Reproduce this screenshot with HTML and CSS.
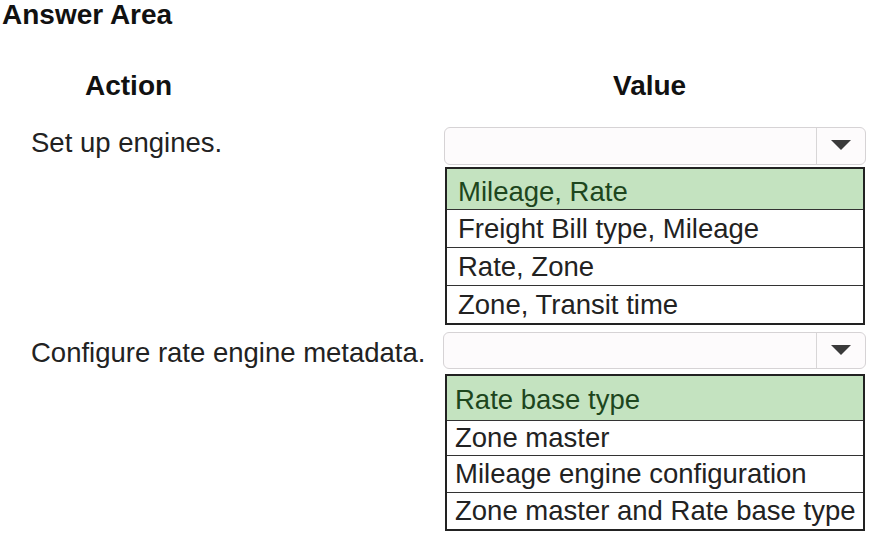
FILE: index.html
```html
<!DOCTYPE html>
<html lang="en">
<head>
  <meta charset="UTF-8">
  <meta name="viewport" content="width=device-width, initial-scale=1.0">
  <title>Answer Area</title>
  <link rel="stylesheet" href="styles.css">
</head>
<body>
  <h1>Answer Area</h1>

  <div class="answer">
    <div class="head head-action">Action</div>
    <div class="head head-value">Value</div>

    <div class="label label-first">Set up engines.</div>
    <div class="field field-first">
      <div class="select">
        <span class="select-value"></span>
        <span class="select-arrow"><span class="arrow"></span></span>
      </div>
      <div class="list list-first">
        <div class="opt selected">Mileage, Rate</div>
        <div class="opt">Freight Bill type, Mileage</div>
        <div class="opt">Rate, Zone</div>
        <div class="opt">Zone, Transit time</div>
      </div>
    </div>

    <div class="label label-second">Configure rate engine metadata.</div>
    <div class="field field-second">
      <div class="select">
        <span class="select-value"></span>
        <span class="select-arrow"><span class="arrow"></span></span>
      </div>
      <div class="list list-second">
        <div class="opt selected">Rate base type</div>
        <div class="opt">Zone master</div>
        <div class="opt">Mileage engine configuration</div>
        <div class="opt">Zone master and Rate base type</div>
      </div>
    </div>
  </div>
</body>
</html>
```

FILE: styles.css
```css
* {
  margin: 0;
  padding: 0;
  box-sizing: border-box;
  font-family: 'Liberation Sans', Arial, sans-serif;
}
body {
  background: #fff;
  color: #222;
  width: 872px;
  height: 539px;
  overflow: hidden;
}
h1 {
  font-size: 28px;
  line-height: 28px;
  font-weight: bold;
  color: #111;
  padding-left: 2px;
  padding-top: 1px;
}
.answer {
  display: grid;
  grid-template-columns: 444px 422px;
  margin-top: 43px;
}
.head {
  font-size: 28px;
  line-height: 28px;
  font-weight: bold;
  color: #111;
  margin-bottom: 27px;
}
.head-action {
  padding-left: 85px;
}
.head-value {
  padding-left: 169px;
}
.label {
  font-size: 27.5px;
  line-height: 32px;
  padding-left: 31px;
  white-space: nowrap;
}
.label-second {
  margin-top: 7px;
  padding-top: 5px;
}
.field {
  display: flex;
  flex-direction: column;
}
.field-first {
  gap: 2px;
}
.field-second {
  gap: 5px;
  margin-top: 7px;
}
.select {
  height: 38px;
  display: flex;
  border: 1px solid #d6d3d5;
  border-radius: 6px;
  background: #fdfbfc;
}
.field-second .select {
  height: 37px;
  margin-left: -1px;
}
.select-value {
  flex: 1;
}
.select-arrow {
  width: 49px;
  border-left: 1px solid #d8d6d7;
  display: flex;
  justify-content: center;
  align-items: center;
}
.arrow {
  width: 0;
  height: 0;
  border-left: 10px solid transparent;
  border-right: 10px solid transparent;
  border-top: 10px solid #3a3a3a;
  margin-top: -2px;
}
.list {
  border: 2px solid #222;
  margin: 0 1px;
  font-size: 27.5px;
  white-space: nowrap;
  overflow: hidden;
  background: #fff;
}
.opt {
  border-top: 1px solid #333;
  padding-left: 11px;
  height: 38px;
  line-height: 38px;
  color: #222;
}
.opt:first-child {
  border-top: none;
}
.list-first .opt:first-child {
  height: 40px;
  padding-top: 6px;
  line-height: 34px;
}
.list-second .opt {
  padding-left: 8px;
  height: 37px;
  line-height: 36px;
}
.list-second .opt:nth-child(2) {
  height: 35px;
  line-height: 34px;
}
.list-second .opt:first-child {
  height: 44px;
  line-height: 48px;
}
.selected {
  background: #c4e3c0;
  color: #1d461d;
}
```
